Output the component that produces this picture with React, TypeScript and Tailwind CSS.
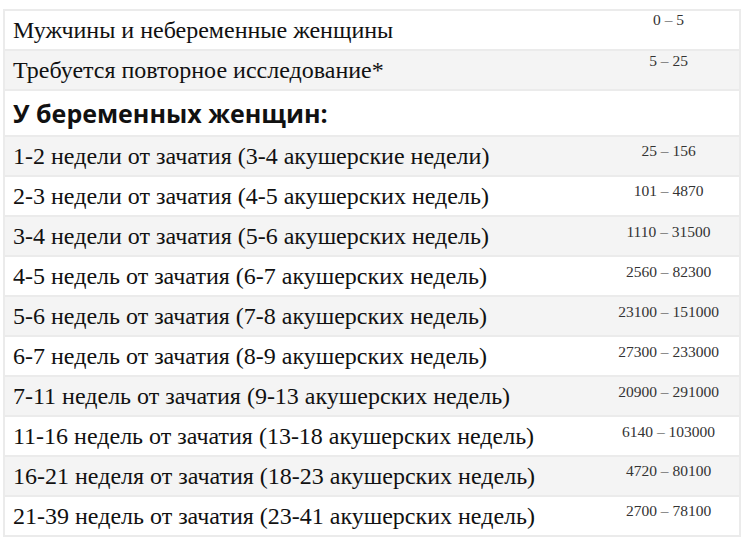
const rows: { label: string; value: string; pad: string }[] = [
  { label: "1-2 недели от зачатия (3-4 акушерские недели)", value: "25 – 156", pad: "pt-[5px]" },
  { label: "2-3 недели от зачатия (4-5 акушерских недель)", value: "101 – 4870", pad: "pt-[5px]" },
  { label: "3-4 недели от зачатия (5-6 акушерских недель)", value: "1110 – 31500", pad: "pt-[6px]" },
  { label: "4-5 недель от зачатия (6-7 акушерских недель)", value: "2560 – 82300", pad: "pt-[6px]" },
  { label: "5-6 недель от зачатия (7-8 акушерских недель)", value: "23100 – 151000", pad: "pt-[6px]" },
  { label: "6-7 недель от зачатия (8-9 акушерских недель)", value: "27300 – 233000", pad: "pt-[6px]" },
  { label: "7-11 недель от зачатия (9-13 акушерских недель)", value: "20900 – 291000", pad: "pt-[6px]" },
  { label: "11-16 недель от зачатия (13-18 акушерских недель)", value: "6140 – 103000", pad: "pt-[6px]" },
  { label: "16-21 неделя от зачатия (18-23 акушерских недель)", value: "4720 – 80100", pad: "pt-[5px]" },
  { label: "21-39 недель от зачатия (23-41 акушерских недель)", value: "2700 – 78100", pad: "pt-[5px]" },
];

function Row({ label, value, gray, pad }: { label: string; value: string; gray: boolean; pad: string }) {
  return (
    <tr className={`h-[40px] border-t-2 border-[#ebebeb] ${gray ? "bg-[#f4f4f4]" : "bg-white"}`}>
      <td className="pl-[8px] align-middle font-['Liberation_Serif',serif] text-[24px] leading-[28px] text-[#111]">
        {label}
      </td>
      <td className={`align-top text-center font-['Liberation_Serif',serif] text-[15.5px] leading-[18px] text-[#333] ${pad}`}>
        {value}
      </td>
    </tr>
  );
}

export default function App() {
  return (
    <div className="bg-white w-[750px] h-[542px] pt-[9px] pl-[3px]">
      <table className="w-[738px] border-collapse border-2 border-[#ebebeb] table-fixed">
        <colgroup>
          <col className="w-[594px]" />
          <col />
        </colgroup>
        <tbody>
          <Row label="Мужчины и небеременные женщины" value="0 – 5" gray={false} pad="pt-[0px]" />
          <Row label="Требуется повторное исследование*" value="5 – 25" gray={true} pad="pt-[1px]" />
          <tr className="h-[46px] border-t-2 border-[#ebebeb] bg-white">
            <td className="pl-[8px] align-middle font-['Open_Sans','Noto_Sans',sans-serif] text-[25px] leading-[30px] font-bold text-[#111]">
              У беременных женщин:
            </td>
            <td />
          </tr>
          {rows.map((r, i) => (
            <Row key={r.label} label={r.label} value={r.value} pad={r.pad} gray={i % 2 === 0} />
          ))}
        </tbody>
      </table>
    </div>
  );
}
